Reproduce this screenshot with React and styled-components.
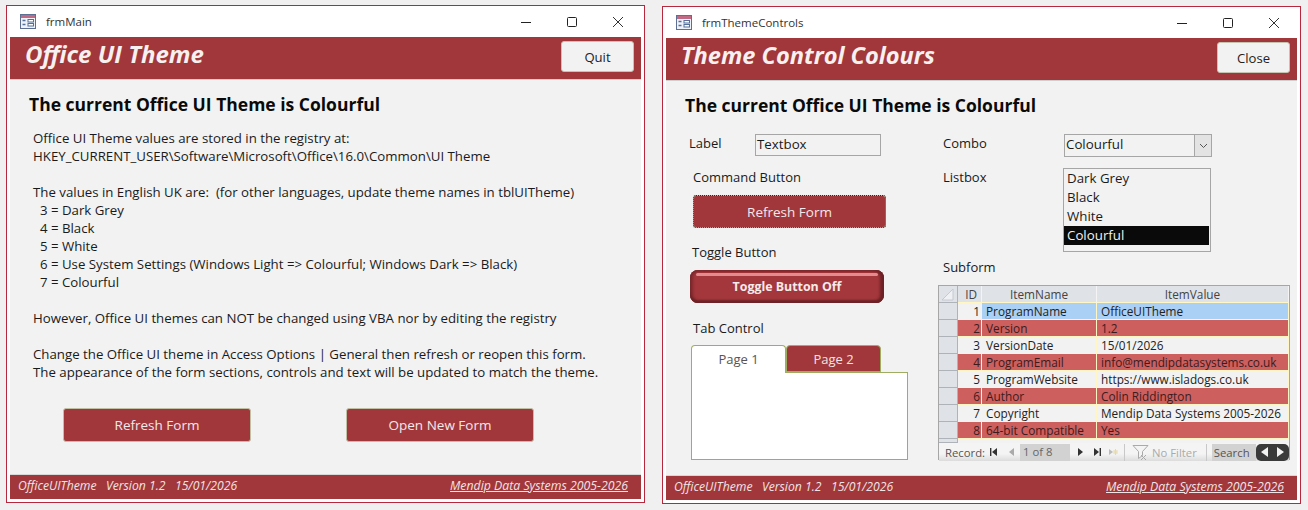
import React from 'react';
import styled, { createGlobalStyle } from 'styled-components';

const MAROON = '#a1373a';
const FONT = '"Open Sans", "Noto Sans", sans-serif';

const Global = createGlobalStyle`
  html, body { margin: 0; padding: 0; background: #f0f0f0; }
  body { font-family: ${FONT}; width: 1308px; height: 510px; overflow: hidden; }
`;

const Desktop = styled.div`
  display: flex;
  align-items: flex-start;
  padding: 5px 0 0 6px;
  gap: 17px;
`;
const Win = styled.div`
  box-sizing: border-box;
  display: flex;
  flex-direction: column;
  width: ${p => p.$w}px;
  height: 498px;
  margin-top: ${p => p.$top}px;
  padding: 0 3px 3px;
  background: #fff;
  border: 1px solid #b8283c;
`;
const TitleBar = styled.div`
  display: flex;
  align-items: center;
  height: 31px;
  flex: none;
  padding-left: 10px;
  font-size: 11.5px;
  color: #333;
`;
const TitleText = styled.span`
  margin-left: 10px;
  flex: 1;
`;
const WinBtn = styled.svg`
  width: 12px;
  height: 12px;
  margin-right: 34px;
  &:last-child { margin-right: 17px; }
`;
const Header = styled.div`
  display: flex;
  align-items: flex-start;
  justify-content: space-between;
  flex: none;
  box-sizing: border-box;
  height: 43px;
  padding: 4px 7px 0 15px;
  background: ${MAROON};
  border-bottom: 1px solid #cfcfcf;
`;
const HeaderTitle = styled.h1`
  margin: 0;
  line-height: 26px;
  font-size: ${p => p.$size}px;
  font-weight: 700;
  font-style: italic;
  color: #f6f0f0;
`;
const PlainButton = styled.button`
  box-sizing: border-box;
  width: 73px;
  height: 31px;
  background: #f2f2f2;
  border: 1px solid #c4c4b0;
  border-radius: 3px;
  font-family: inherit;
  font-size: 13.1px;
  color: #222;
`;
const Content = styled.div`
  flex: 1;
  background: #f2f2f2;
  padding: 12px 0 0 19px;
`;
const Heading = styled.h2`
  margin: 0;
  height: 24px;
  line-height: 25px;
  font-size: 17.5px;
  font-weight: 700;
  color: #0a0a0a;
`;
const Body = styled.p`
  margin: 13px 0 0 4px;
  font-size: 13.25px;
  line-height: 18px;
  color: #1a1a1a;
  white-space: pre;
`;
const ButtonRow = styled.div`
  display: flex;
  gap: 95px;
  margin: 27px 0 0 34px;
`;
const ActionButton = styled.button`
  box-sizing: border-box;
  width: ${p => p.$w || 188}px;
  height: ${p => p.$h || 34}px;
  margin: ${p => p.$top || 0}px 0 0 ${p => p.$left || 0}px;
  background: ${MAROON};
  border: 1px solid #c0c0a4;
  border-radius: 3px;
  outline: ${p => (p.$focus ? '1px dotted #2a2a20' : 'none')};
  outline-offset: -1px;
  font-family: inherit;
  font-size: 13.5px;
  color: #f3e8ea;
`;
const Footer = styled.div`
  display: flex;
  align-items: center;
  justify-content: space-between;
  flex: none;
  box-sizing: border-box;
  height: 25px;
  padding: 0 13px 4px 8px;
  background: ${MAROON};
  border-top: 1px solid #d8d8d8;
  font-size: 12.2px;
  font-style: italic;
  color: #f0e4e6;
`;
const FooterLink = styled.span`
  text-decoration: underline;
  font-size: 12.3px;
`;

const Columns = styled.div`
  display: flex;
  margin: 17px 0 0 4px;
`;
const Col = styled.div`
  display: flex;
  flex-direction: column;
  width: ${p => p.$w}px;
`;
const Caption = styled.div`
  height: 18px;
  line-height: 19px;
  font-size: 13px;
  color: #1a1a1a;
  margin-top: ${p => p.$top || 0}px;
  margin-left: ${p => p.$left || 0}px;
  width: ${p => (p.$w ? `${p.$w}px` : 'auto')};
  flex: none;
`;
const FieldRow = styled.div`
  display: flex;
  margin-top: ${p => p.$top || 0}px;
`;
const TextBox = styled.div`
  box-sizing: border-box;
  width: 126px;
  height: 22px;
  line-height: 19px;
  padding-left: 1px;
  border: 1px solid #a6a6a6;
  font-size: 13.3px;
  color: #1a1a1a;
`;
const Combo = styled.div`
  box-sizing: border-box;
  display: flex;
  justify-content: space-between;
  width: 148px;
  height: 23px;
  line-height: 19px;
  padding-left: 1px;
  border: 1px solid #a6a6a6;
  font-size: 13.3px;
  color: #1a1a1a;
`;
const ComboArrow = styled.div`
  display: flex;
  align-items: center;
  justify-content: center;
  width: 16px;
  background: #e3e3e3;
  border-left: 1px solid #a6a6a6;
`;
const ListBox = styled.div`
  box-sizing: border-box;
  width: 148px;
  height: 84px;
  padding: 0 1px 5px 0;
  border: 1px solid #a6a6a6;
  font-size: 13.3px;
  color: #1a1a1a;
`;
const ListItem = styled.div`
  height: 19px;
  line-height: 19px;
  padding-left: 3px;
  background: ${p => (p.$sel ? '#0a0a0a' : 'transparent')};
  color: ${p => (p.$sel ? '#f2f2f2' : 'inherit')};
`;
const ToggleButton = styled.div`
  position: relative;
  box-sizing: border-box;
  width: 194px;
  height: 33px;
  margin: 9px 0 0 ${p => p.$left}px;
  line-height: 33px;
  text-align: center;
  border-radius: 8px;
  background: #a4373c;
  box-shadow: inset 0 -3px 2px #6c2226, inset 3px 0 3px #7d2a2e, inset -4px 0 3px #6c2226, inset 0 2px 1px #8c3035;
  font-size: 12.4px;
  font-weight: 700;
  color: #f6eaea;
  &::before {
    content: '';
    position: absolute;
    left: 6px;
    right: 6px;
    top: 3px;
    height: 3px;
    border-radius: 2px;
    background: #e38b8f;
  }
`;
const TabStrip = styled.div`
  display: flex;
  margin: 8px 0 0 2px;
`;
const Tab = styled.div`
  box-sizing: border-box;
  width: 95px;
  height: ${p => (p.$active ? 28 : 27)}px;
  line-height: 27px;
  text-align: center;
  font-size: 13px;
  background: ${p => (p.$active ? '#fff' : MAROON)};
  color: ${p => (p.$active ? '#555' : '#f0e4e6')};
  border: 1px solid #9dad62;
  border-bottom: ${p => (p.$active ? 'none' : '1px solid #9dad62')};
  border-radius: 4px 4px 0 0;
  position: relative;
  z-index: 1;
`;
const TabPanel = styled.div`
  box-sizing: border-box;
  width: 217px;
  height: 88px;
  margin: -1px 0 0 2px;
  background: #fff;
  border: 1px solid #9dad62;
`;

const Sheet = styled.div`
  box-sizing: border-box;
  width: 352px;
  height: 175px;
  margin: 9px 0 0 -5px;
  background: #f2f2f2;
  border: 1px solid #a6a6a6;
  font-size: 11.8px;
`;
const Row = styled.div`
  display: grid;
  grid-template-columns: 19px 24px 115px 192px;
  height: 17px;
  line-height: 16px;
`;
const Selector = styled.div`
  background: #dfe3e8;
  border-bottom: 1px solid #aeb3ba;
  border-right: 1px solid #aeb3ba;
  box-sizing: border-box;
`;
const Corner = styled.svg`
  display: block;
`;
const HeadCell = styled.div`
  box-sizing: border-box;
  background: #dfe3e8;
  border-right: 1px solid #f4f4f4;
  border-bottom: 1px solid #fff6c4;
  text-align: ${p => (p.$right ? 'right' : 'center')};
  padding-right: ${p => (p.$right ? 4 : 0)}px;
  color: #444;
`;
const Cell = styled.div`
  box-sizing: border-box;
  overflow: hidden;
  white-space: nowrap;
  padding: 0 ${p => (p.$right ? 1 : 4)}px;
  text-align: ${p => (p.$right ? 'right' : 'left')};
  background: ${p => (p.$sel ? '#aad0f5' : p.$alt ? '#cd5f5f' : '#f2f2f2')};
  color: ${p => (p.$alt ? '#3c1c1c' : '#222')};
  border-right: 1px solid #fff6c4;
  border-bottom: 1px solid #fff6c4;
`;
const Filler = styled.div`
  height: 4px;
  display: grid;
  grid-template-columns: 19px 1fr;
`;
const NavBar = styled.div`
  display: flex;
  align-items: center;
  height: 18px;
  padding-left: 6px;
  background: linear-gradient(#f4f4f4, #f4f4f4 60%, #dcdcdc);
  font-size: 11.3px;
  color: #555;
  white-space: nowrap;
`;
const NavIcon = styled.svg`
  width: 10px;
  height: 10px;
  margin-left: ${p => p.$left}px;
  flex: none;
`;
const PageBox = styled.div`
  width: 50px;
  height: 17px;
  line-height: 16px;
  margin-left: 4px;
  padding-left: 3px;
  box-sizing: border-box;
  background: #d2d2d2;
  color: #666;
`;
const NavSep = styled.div`
  width: 1px;
  height: 17px;
  margin-left: ${p => p.$left}px;
  background: #c8c8c8;
  flex: none;
`;
const Funnel = styled.svg`
  margin-left: 7px;
  flex: none;
`;
const NoFilter = styled.span`
  margin-left: 2px;
  color: #aaa;
`;
const SearchBox = styled.div`
  width: 44px;
  height: 17px;
  line-height: 17px;
  margin-left: 5px;
  padding-left: 2px;
  box-sizing: border-box;
  background: #d2d2d2;
  color: #555;
`;
const ScrollCap = styled.div`
  display: flex;
  align-items: center;
  justify-content: space-around;
  flex: 1;
  height: 17px;
  background: #3a3a3a;
  border-radius: 5px;
`;

const FormIcon = () => (
  <svg width="16" height="15" viewBox="0 0 16 15">
    <rect x="0.5" y="0.5" width="15" height="14" fill="#eef2f9" stroke="#5d6f92" />
    <rect x="1" y="1" width="14" height="3" fill="#c06a86" />
    <path d="M2.5 6.5h3M2.5 10.5h3" stroke="#53709c" strokeWidth="1.4" />
    <rect x="8" y="5.5" width="5.5" height="2.5" fill="#fff" stroke="#53709c" />
    <rect x="8" y="9.5" width="5.5" height="2.5" fill="#fff" stroke="#53709c" />
  </svg>
);

const WindowButtons = () => (
  <>
    <WinBtn viewBox="0 0 12 12"><path d="M1 6.5h10" stroke="#222" /></WinBtn>
    <WinBtn viewBox="0 0 12 12"><rect x="1.5" y="1.5" width="9" height="9" rx="1" fill="none" stroke="#222" /></WinBtn>
    <WinBtn viewBox="0 0 12 12"><path d="M1 1l10 10M11 1L1 11" stroke="#333" /></WinBtn>
  </>
);

const AppWindow = ({ name, title, titleSize, action, top, children }) => (
  <Win $w={639} $top={top}>
    <TitleBar>
      <FormIcon />
      <TitleText>{name}</TitleText>
      <WindowButtons />
    </TitleBar>
    <Header>
      <HeaderTitle $size={titleSize}>{title}</HeaderTitle>
      <PlainButton>{action}</PlainButton>
    </Header>
    <Content>
      <Heading>The current Office UI Theme is Colourful</Heading>
      {children}
    </Content>
    <Footer>
      <span>OfficeUITheme&nbsp;&nbsp; Version 1.2&nbsp;&nbsp; 15/01/2026</span>
      <FooterLink>Mendip Data Systems 2005-2026</FooterLink>
    </Footer>
  </Win>
);

const BODY_TEXT = `Office UI Theme values are stored in the registry at:
HKEY_CURRENT_USER\\Software\\Microsoft\\Office\\16.0\\Common\\UI Theme

The values in English UK are:  (for other languages, update theme names in tblUITheme)
  3 = Dark Grey
  4 = Black
  5 = White
  6 = Use System Settings (Windows Light => Colourful; Windows Dark => Black)
  7 = Colourful

However, Office UI themes can NOT be changed using VBA nor by editing the registry

Change the Office UI theme in Access Options | General then refresh or reopen this form.
The appearance of the form sections, controls and text will be updated to match the theme.`;

const items = [
  ['ProgramName', 'OfficeUITheme'],
  ['Version', '1.2'],
  ['VersionDate', '15/01/2026'],
  ['ProgramEmail', 'info@mendipdatasystems.co.uk'],
  ['ProgramWebsite', 'https://www.isladogs.co.uk'],
  ['Author', 'Colin Riddington'],
  ['Copyright', 'Mendip Data Systems 2005-2026'],
  ['64-bit Compatible', 'Yes'],
];

const Datasheet = () => (
  <Sheet>
    <Row>
      <Selector>
        <Corner width="18" height="16" viewBox="0 0 18 16">
          <path d="M3 14L14 3v11z" fill="#eef0f3" stroke="#c6cad0" />
        </Corner>
      </Selector>
      <HeadCell $right>ID</HeadCell>
      <HeadCell>ItemName</HeadCell>
      <HeadCell>ItemValue</HeadCell>
    </Row>
    {items.map(([k, v], i) => (
      <Row key={k}>
        <Selector />
        <Cell $right $alt={i % 2 === 1}>{i + 1}</Cell>
        <Cell $alt={i % 2 === 1} $sel={i === 0}>{k}</Cell>
        <Cell $alt={i % 2 === 1} $sel={i === 0}>{v}</Cell>
      </Row>
    ))}
    <Filler><Selector /></Filler>
    <NavBar>
      Record:
      <NavIcon $left={3} viewBox="0 0 10 10"><path d="M2 1h1.4v8H2zM9 1v8L4 5z" fill="#333" /></NavIcon>
      <NavIcon $left={8} viewBox="0 0 10 10"><path d="M8 1v8L3 5z" fill="#aaa" /></NavIcon>
      <PageBox>1 of 8</PageBox>
      <NavIcon $left={6} viewBox="0 0 10 10"><path d="M2 1v8l5-4z" fill="#333" /></NavIcon>
      <NavIcon $left={7} viewBox="0 0 10 10"><path d="M1 1v8l5-4zM6.6 1H8v8H6.6z" fill="#333" /></NavIcon>
      <NavIcon $left={5} viewBox="0 0 10 10"><path d="M1 2v6l4-3z" fill="#bbb" /><path d="M7.5 2v6M4.8 5h5.2M5.6 3l3.8 4M9.4 3L5.6 7" stroke="#e8d9a8" /></NavIcon>
      <NavSep $left={6} />
      <Funnel width="18" height="17" viewBox="0 0 18 17">
        <path d="M1 1.5h15l-5.5 6v4l-4 3v-7z" fill="#f4f4f4" stroke="#aaa" />
        <path d="M9 11l5 5M14 11l-5 5" stroke="#aaa" />
      </Funnel>
      <NoFilter>No Filter</NoFilter>
      <NavSep $left={9} />
      <SearchBox>Search</SearchBox>
      <ScrollCap>
        <svg width="9" height="10" viewBox="0 0 9 10"><path d="M8 0v10L1 5z" fill="#f2f2f2" /></svg>
        <svg width="9" height="10" viewBox="0 0 9 10"><path d="M1 0v10l7-5z" fill="#f2f2f2" /></svg>
      </ScrollCap>
    </NavBar>
  </Sheet>
);

export default function App() {
  return (
    <>
      <Global />
      <Desktop>
        <AppWindow name="frmMain" title="Office UI Theme" titleSize={24} action="Quit" top={0}>
          <Body>{BODY_TEXT}</Body>
          <ButtonRow>
            <ActionButton>Refresh Form</ActionButton>
            <ActionButton>Open New Form</ActionButton>
          </ButtonRow>
        </AppWindow>
        <AppWindow name="frmThemeControls" title="Theme Control Colours" titleSize={23.6} action="Close" top={1}>
          <Columns>
            <Col $w={254}>
              <FieldRow>
                <Caption $w={66}>Label</Caption>
                <TextBox>Textbox</TextBox>
              </FieldRow>
              <Caption $top={12} $left={4}>Command Button</Caption>
              <ActionButton $focus $w={193} $h={33} $left={4} $top={9}>Refresh Form</ActionButton>
              <Caption $top={15} $left={3}>Toggle Button</Caption>
              <ToggleButton $left={1}>Toggle Button Off</ToggleButton>
              <Caption $top={16} $left={4}>Tab Control</Caption>
              <TabStrip>
                <Tab $active>Page 1</Tab>
                <Tab>Page 2</Tab>
              </TabStrip>
              <TabPanel />
            </Col>
            <Col $w={352}>
              <FieldRow>
                <Caption $w={121}>Combo</Caption>
                <Combo>
                  Colourful
                  <ComboArrow>
                    <svg width="9" height="6" viewBox="0 0 9 6"><path d="M1 1l3.5 3.5L8 1" fill="none" stroke="#555" /></svg>
                  </ComboArrow>
                </Combo>
              </FieldRow>
              <FieldRow $top={11}>
                <Caption $w={120}>Listbox</Caption>
                <ListBox>
                  <ListItem>Dark Grey</ListItem>
                  <ListItem>Black</ListItem>
                  <ListItem>White</ListItem>
                  <ListItem $sel>Colourful</ListItem>
                </ListBox>
              </FieldRow>
              <Caption $top={6}>Subform</Caption>
              <Datasheet />
            </Col>
          </Columns>
        </AppWindow>
      </Desktop>
    </>
  );
}
